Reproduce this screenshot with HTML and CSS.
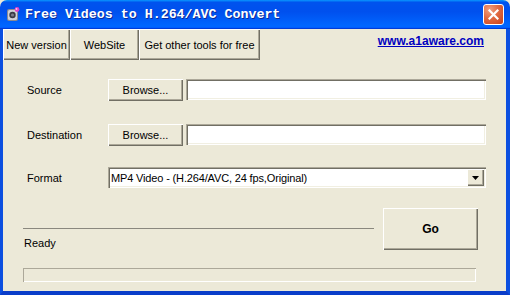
FILE: index.html
```html
<!DOCTYPE html>
<html lang="en">
<head>
    <meta charset="UTF-8">
    <meta name="viewport" content="width=device-width, initial-scale=1.0">
    <title>Free Videos to H.264/AVC Convert</title>
    <link rel="stylesheet" href="styles.css">
</head>
<body>
    <div class="window">
        <!-- Title bar -->
        <div class="titlebar">
            <svg class="app-icon" width="16" height="16" viewBox="0 0 16 16">
                <rect x="2" y="3" width="11" height="12" rx="2" fill="#8a8a92"/>
                <rect x="3" y="4" width="9" height="10" rx="1.5" fill="#d0d0d8"/>
                <circle cx="7.5" cy="9" r="3.2" fill="#3a3a44"/>
                <circle cx="7.5" cy="9" r="1.6" fill="#7a7a88"/>
                <circle cx="12" cy="3.5" r="2.4" fill="#e040c8"/>
                <circle cx="11.5" cy="3" r="0.9" fill="#ffc0f0"/>
            </svg>
            <span class="title-text">Free Videos to H.264/AVC Convert</span>
            <button class="close-btn">
                <svg width="11" height="11" viewBox="0 0 11 11">
                    <path d="M1.5 1.5 L9.5 9.5 M9.5 1.5 L1.5 9.5" stroke="#fff" stroke-width="2.2" stroke-linecap="square"/>
                </svg>
            </button>
        </div>

        <div class="frame">
            <!-- Toolbar -->
            <div class="toolbar">
                <button class="raised tool-btn btn-new">New version</button>
                <button class="raised tool-btn btn-site">WebSite</button>
                <button class="raised tool-btn btn-tools">Get other tools for free</button>
                <a class="site-link" href="#">www.a1aware.com</a>
            </div>

            <!-- Form -->
            <div class="form">
                <div class="field-label">Source</div>
                <button class="raised browse-btn">Browse...</button>
                <div class="sunken text-box"></div>

                <div class="field-label row-2">Destination</div>
                <button class="raised browse-btn row-2">Browse...</button>
                <div class="sunken text-box row-2"></div>

                <div class="field-label">Format</div>
                <div class="sunken combo">
                    <span class="combo-text">MP4 Video - (H.264/AVC, 24 fps,Original)</span>
                    <span class="raised combo-arrow">
                        <svg width="7" height="4" viewBox="0 0 7 4"><path d="M0 0 H7 L3.5 4 Z" fill="#000"/></svg>
                    </span>
                </div>
            </div>

            <!-- Status + Go -->
            <div class="bottom">
                <div class="status-col">
                    <div class="separator"></div>
                    <div class="status-text">Ready</div>
                </div>
                <button class="raised go-btn">Go</button>
            </div>

            <div class="sunken-light progress"></div>
        </div>
    </div>
</body>
</html>
```

FILE: styles.css
```css
body {
    margin: 0;
    font-family: "Liberation Sans", Arial, sans-serif;
    font-size: 11px;
    background: #ece9d8;
}

.window {
    width: 510px;
    height: 295px;
    display: flex;
    flex-direction: column;
    overflow: hidden;
}

/* Title bar */
.titlebar {
    height: 29px;
    flex: none;
    display: flex;
    align-items: center;
    padding: 0 6px 0 5px;
    border-radius: 7px 7px 0 0;
    background: linear-gradient(180deg, #0997ff, #0053ee 8%, #0050ee 40%, #0066ff 88%, #0066ff 93%, #005bff 95%, #003dd7 96%, #003dd7);
}

.app-icon {
    flex: none;
    margin-top: -1px;
}

.title-text {
    margin-left: 4px;
    color: #fff;
    font-family: "Liberation Mono", "DejaVu Sans Mono", monospace;
    font-weight: bold;
    font-size: 13.3px;
    text-shadow: 1px 1px #0c2a9a;
    margin-top: -1px;
}

.close-btn {
    margin-left: auto;
    width: 21px;
    height: 21px;
    padding: 0;
    border: 1px solid #fff;
    border-radius: 3px;
    background: radial-gradient(circle at 30% 25%, #f0a080, #e06a42 45%, #c8401a);
    display: flex;
    align-items: center;
    justify-content: center;
    margin-top: -1px;
}

/* Window frame */
.frame {
    flex: 1;
    display: flex;
    flex-direction: column;
    background: #ece9d8;
    border-left: 3px solid #0b4fe0;
    border-right: 4px solid #0b4fe0;
    border-bottom: 4px solid #0a3dc9;
}

/* 3D borders */
.raised {
    background: #ece9d8;
    border: none;
    box-shadow: inset 1px 1px #fff, inset -1px -1px #716f64, inset -2px -2px #aca899;
    font-family: inherit;
    font-size: 11px;
    color: #000;
    padding: 0;
}

.sunken {
    background: #fff;
    box-shadow: inset 1px 1px #aca899, inset 2px 2px #716f64, inset -1px -1px #fff, inset -2px -2px #f1efe2;
}

.sunken-light {
    box-shadow: inset 1px 1px #aca899, inset -1px -1px #fff;
}

/* Toolbar */
.toolbar {
    height: 31px;
    display: flex;
    align-items: stretch;
}

.tool-btn {
    height: 31px;
}

.btn-new {
    width: 67px;
}

.btn-site {
    width: 69px;
}

.btn-tools {
    width: 121px;
}

.site-link {
    margin-left: auto;
    margin-right: 22px;
    margin-top: 5px;
    align-self: flex-start;
    color: #0000c0;
    font-weight: bold;
    font-size: 12px;
}

/* Form */
.form {
    display: grid;
    grid-template-columns: 78px 75px 300px;
    grid-auto-rows: 22px;
    column-gap: 3px;
    row-gap: 22px;
    padding: 19px 0 0 24px;
}

.form .row-2 {
    margin-top: 1px;
    margin-bottom: -1px;
}

.field-label {
    display: flex;
    align-items: center;
}

.browse-btn {
    height: 22px;
}

.text-box {
    height: 21px;
}

.combo {
    grid-column: 2 / 4;
    height: 21px;
    display: flex;
    align-items: center;
    padding: 0 2px 0 3px;
}

.combo-text {
    flex: 1;
    letter-spacing: -0.15px;
}

.combo-arrow {
    width: 17px;
    height: 17px;
    display: flex;
    align-items: center;
    justify-content: center;
}

/* Bottom */
.bottom {
    display: flex;
    padding: 19px 0 0 20px;
}

.status-col {
    width: 351px;
}

.separator {
    margin-top: 20px;
    border-top: 1px solid #8a887e;
}

.status-text {
    margin-top: 8px;
    line-height: 13px;
    padding-left: 1px;
}

.go-btn {
    margin-left: 9px;
    width: 95px;
    height: 42px;
    font-size: 12px;
    font-weight: bold;
}

.progress {
    margin: 18px 0 0 20px;
    width: 453px;
    height: 14px;
}
```
